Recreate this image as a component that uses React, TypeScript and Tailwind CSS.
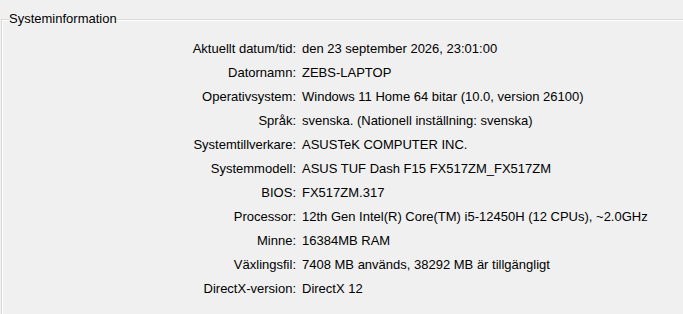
const rows: [string, string][] = [
  ["Aktuellt datum/tid:", "den 23 september 2026, 23:01:00"],
  ["Datornamn:", "ZEBS-LAPTOP"],
  ["Operativsystem:", "Windows 11 Home 64 bitar (10.0, version 26100)"],
  ["Språk:", "svenska. (Nationell inställning: svenska)"],
  ["Systemtillverkare:", "ASUSTeK COMPUTER INC."],
  ["Systemmodell:", "ASUS TUF Dash F15 FX517ZM_FX517ZM"],
  ["BIOS:", "FX517ZM.317"],
  ["Processor:", "12th Gen Intel(R) Core(TM) i5-12450H (12 CPUs), ~2.0GHz"],
  ["Minne:", "16384MB RAM"],
  ["Växlingsfil:", "7408 MB används, 38292 MB är tillgängligt"],
  ["DirectX-version:", "DirectX 12"],
];

export default function App() {
  return (
    <div className="h-[314px] w-full overflow-hidden bg-[#f0f0f0] font-['Liberation_Sans',Tahoma,sans-serif] text-[13px] text-black">
      <div className="pt-[11px] pl-px">
        <fieldset className="h-[320px] border-t border-l border-[#d8d8d8] pl-[7px] shadow-[inset_1px_1px_0_#ffffff]">
          <legend className="leading-4">Systeminformation</legend>
          <div className="mt-[10px] grid grid-cols-[287px_1fr] gap-x-[6px]">
            {rows.map(([label, value]) => (
              <div key={label} className="contents">
                <div className="h-6 text-right leading-6">{label}</div>
                <div className="h-6 whitespace-nowrap leading-6">{value}</div>
              </div>
            ))}
          </div>
        </fieldset>
      </div>
    </div>
  );
}
